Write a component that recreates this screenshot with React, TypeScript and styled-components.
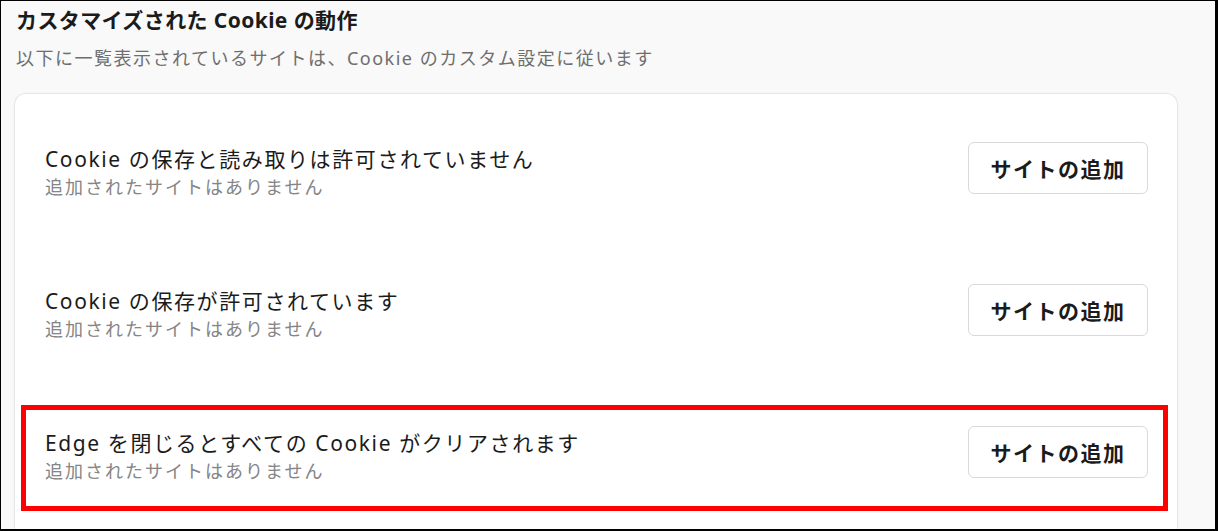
import React from "react";
import styled, { createGlobalStyle } from "styled-components";

const GlobalStyle = createGlobalStyle`
  html, body { margin: 0; padding: 0; }
  body {
    background: #ffffff;
    font-family: "Noto Sans", "Noto Sans CJK JP", sans-serif;
  }
`;

const Frame = styled.div`
  box-sizing: border-box;
  width: 1218px;
  height: 531px;
  overflow: hidden;
  background: #f9f9f9;
  border-style: solid;
  border-color: #000;
  border-width: 1px 3px 2px 1px;
  padding: 4px 0 0 13px;
  display: flex;
  flex-direction: column;
`;

const Heading = styled.h2`
  margin: 0;
  font-size: 21px;
  line-height: 30px;
  font-weight: 700;
  color: #1b1b1b;
  padding-left: 2px;
  letter-spacing: 0.4px;
`;

const Description = styled.p`
  margin: 10px 0 0;
  font-size: 18px;
  line-height: 26px;
  color: #6e6e6e;
  padding-left: 2px;
  letter-spacing: 1.5px;
`;

const Card = styled.section`
  margin-top: 22px;
  width: 1164px;
  box-sizing: border-box;
  background: #fff;
  border: 1px solid #e6e6e6;
  border-bottom: none;
  border-radius: 12px 12px 0 0;
  box-shadow: 0 0 2px rgba(0, 0, 0, 0.04);
  padding-top: 3px;
  display: flex;
  flex-direction: column;
  flex: 1;
`;

const Row = styled.div`
  position: relative;
  height: 142px;
  display: flex;
  align-items: center;
  justify-content: space-between;
  padding: 0 29px 0 30px;
`;

const Texts = styled.div`
  display: flex;
  flex-direction: column;
  margin-top: 10px;
`;

const RowTitle = styled.div`
  font-size: 21px;
  line-height: 28px;
  color: #1b1b1b;
  letter-spacing: 1.6px;
`;

const RowSub = styled.div`
  font-size: 18px;
  line-height: 28px;
  color: #858585;
  letter-spacing: 2px;
`;

const AddButton = styled.button`
  width: 180px;
  height: 52px;
  box-sizing: border-box;
  background: #fff;
  border: 1px solid #d9d9d9;
  border-radius: 6px;
  font-family: "Noto Sans CJK JP", sans-serif;
  font-size: 21px;
  font-weight: 700;
  color: #1b1b1b;
  letter-spacing: 1.5px;
  cursor: pointer;
`;

const Highlight = styled.div`
  position: absolute;
  left: 6px;
  right: 9px;
  top: 24px;
  bottom: 12px;
  border: 5px solid #ff0000;
  pointer-events: none;
`;

const rows = [
  { title: "Cookie の保存と読み取りは許可されていません", highlighted: false },
  { title: "Cookie の保存が許可されています", highlighted: false },
  { title: "Edge を閉じるとすべての Cookie がクリアされます", highlighted: true },
];

export default function App() {
  return (
    <>
      <GlobalStyle />
      <Frame>
        <Heading>カスタマイズされた Cookie の動作</Heading>
        <Description>以下に一覧表示されているサイトは、Cookie のカスタム設定に従います</Description>
        <Card>
          {rows.map((r) => (
            <Row key={r.title}>
              <Texts>
                <RowTitle>{r.title}</RowTitle>
                <RowSub>追加されたサイトはありません</RowSub>
              </Texts>
              <AddButton>サイトの追加</AddButton>
              {r.highlighted && <Highlight />}
            </Row>
          ))}
        </Card>
      </Frame>
    </>
  );
}
